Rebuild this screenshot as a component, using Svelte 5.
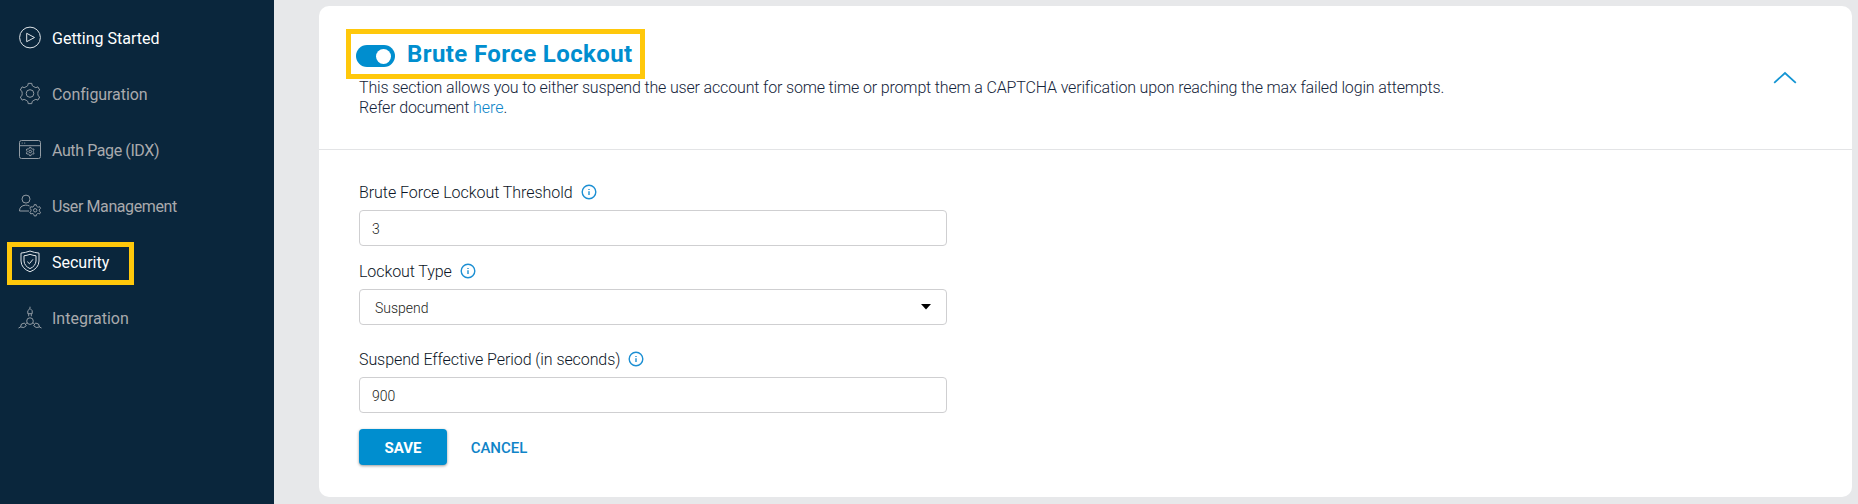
<script>
  const items = [
    { label: 'Getting Started', icon: 'play', bright: true, fit: 'f0' },
    { label: 'Configuration', icon: 'gear', fit: 'f1' },
    { label: 'Auth Page (IDX)', icon: 'page', fit: 'f3' },
    { label: 'User Management', icon: 'user', fit: 'f3' },
    { label: 'Security', icon: 'shield', bright: true, marked: true, fit: 'f0' },
    { label: 'Integration', icon: 'nodes', fit: 'f0' }
  ];

  // Outline of a rounded cog with the given centre, radii and number of teeth.
  function cog(cx, cy, outer, inner, teeth) {
    const step = (Math.PI * 2) / teeth;
    const at = (r, a) => `${(cx + r * Math.sin(a)).toFixed(2)} ${(cy - r * Math.cos(a)).toFixed(2)}`;
    let d = '';
    for (let i = 0; i < teeth; i++) {
      const a = i * step;
      d += `${i ? 'L' : 'M'}${at(outer, a - step * 0.17)}L${at(outer, a + step * 0.17)}L${at(inner + 0.3, a + step * 0.25)}Q${at(inner - 0.4, a + step * 0.5)} ${at(inner + 0.3, a + step * 0.75)}`;
    }
    return d + 'Z';
  }
</script>

{#snippet info()}
  <svg class="info" viewBox="0 0 16 16"><circle cx="8" cy="8" r="6.8" /><path d="M8 7.2v3.8M8 4.9v1.1" /></svg>
{/snippet}

<div class="page">
  <nav>
    {#each items as item}
      <a class="item" class:bright={item.bright} class:marked={item.marked}>
        <svg viewBox="0 0.5 24 24">
          {#if item.icon === 'play'}
            <circle cx="12" cy="12" r="10.4" /><path d="M8.7 7.8v8.4l7.8-4.2z" />
          {:else if item.icon === 'gear'}
            <path d={cog(12, 12, 10.3, 8, 6)} /><circle cx="12" cy="12" r="3.8" />
          {:else if item.icon === 'page'}
            <rect x="1.5" y="3" width="21" height="18" rx="2" />
            <path d="M1.5 8.2h21M3.7 5.6h1M6.2 5.6h1" />
            <path d={cog(12.2, 14, 4.2, 3.1, 6)} /><circle cx="12.2" cy="14" r="1.3" />
          {:else if item.icon === 'user'}
            <circle cx="8" cy="5.6" r="4" />
            <path d="M11.5 12.5Q9.7 11.6 7.6 11.6Q1.5 12.2 1.5 17.5H11" />
            <path d={cog(17.2, 16.8, 5.7, 4.2, 6)} /><circle cx="17.2" cy="16.8" r="1.7" />
          {:else if item.icon === 'shield'}
            <path d="M12 1.5Q7.5 3.2 3 3.6V11.5Q3.3 19 12 22.3Q20.7 19 21 11.5V3.6Q16.5 3.2 12 1.5Z" />
            <path d="M12 4.8Q9 6 6 6.3V11.5Q6.4 16.6 12 19.1Q17.6 16.6 18 11.5V6.3Q15 6 12 4.8Z" />
            <path d="M9.3 12.2L11.4 14.2L15 9.8" />
          {:else}
            <circle cx="12" cy="15.6" r="3.3" />
            <path d="M12 1.2v1.8M9.8 8.2V5.2L12 3L14.2 5.2V8.2ZM10.7 8.200v2.600M13.300 8.200v2.600" />
            <path d="M9.200 17.300L8 18M14.800 17.300L16 18M.5 22.500L2.500 21.500M23.500 22.500L21.500 21.500M2.500 21.500L3.500 18.500L6.500 17.500L8.300 20.200L5.800 22ZM21.500 21.500L20.500 18.500L17.500 17.500L15.700 20.200L18.200 22Z" />
          {/if}
        </svg>
        <span class={item.fit}>{item.label}</span>
      </a>
    {/each}
  </nav>

  <main>
    <section class="card">
      <header>
        <div class="intro">
          <div class="title">
            <span class="toggle"><i></i></span>
            <h1>Brute Force Lockout</h1>
          </div>
          <p>
            This section allows you to either suspend the user account for some time or prompt them a CAPTCHA verification upon reaching the max failed login attempts.<br />Refer document <a class="link">here</a>.
          </p>
        </div>
        <svg class="chevron" viewBox="0 0 24 14"><path d="M1.2 11.8L12 2L22.8 11.8" /></svg>
      </header>

      <form>
        <div class="label"><span>Brute Force Lockout Threshold</span>{@render info()}</div>
        <div class="field">3</div>
        <div class="label second"><span class="f1">Lockout Type</span>{@render info()}</div>
        <div class="field select">Suspend<svg viewBox="0 0 10 6"><path d="M0 0h10L5 5.5z" /></svg></div>
        <div class="label third"><span class="f1">Suspend Effective Period (in seconds)</span>{@render info()}</div>
        <div class="field">900</div>
        <div class="actions">
          <button type="button" class="save">SAVE</button>
          <button type="button" class="cancel">CANCEL</button>
        </div>
      </form>
    </section>
  </main>
</div>

<style>
  :global(body) { background: #e7e8ea; overflow: hidden; }
  .page { display: flex; height: 504px; font: 16px/20px Roboto, sans-serif; color: #14243a; }
  nav { box-sizing: border-box; width: 274px; padding-top: 10px; background: #0a263c; }
  .item { position: relative; display: flex; align-items: center; gap: 10px; height: 56px; padding-left: 18px; color: #a9aaad; }
  .item svg { width: 24px; height: 24px; fill: none; stroke: #939ca4; stroke-width: 1; stroke-linejoin: round; }
  .item span { padding-top: 2px; }
  .item.bright { color: #fff; }
  .item.bright svg { stroke: #dfe4e8; }
  .marked::after { content: ''; position: absolute; left: 7px; top: 8px; width: 117px; height: 33px; border: 5px solid #ffc80b; }
  .f0 { letter-spacing: 0; }
  .f1 { letter-spacing: -0.08px; }
  .f3 { letter-spacing: -0.4px; }

  main { flex: 1; padding: 6px 6px 7px 45px; }
  .card { height: 491px; border-radius: 10px; background: #fff; }
  header { box-sizing: border-box; display: flex; justify-content: space-between; height: 144px; padding: 35px 55px 0 40px; border-bottom: 1px solid #e3e4e6; }
  .title { position: relative; display: flex; align-items: center; gap: 12px; height: 30px; margin-left: -3px; }
  .title::after { content: ''; position: absolute; left: -10px; top: -12px; width: 289px; height: 40px; border: 5px solid #ffc80b; }
  .toggle { box-sizing: border-box; width: 39px; height: 22px; padding: 3px 4px; border-radius: 11px; background: #008ecf; display: flex; justify-content: flex-end; align-items: center; }
  .toggle i { width: 15px; height: 15px; border-radius: 50%; background: #fff; }
  h1 { margin: 0; padding-bottom: 5px; font-size: 24px; line-height: 28px; font-weight: 700; letter-spacing: 0.4px; color: #008ecf; }
  p { margin: 7px 0 0; font-weight: 300; letter-spacing: -0.155px; white-space: nowrap; }
  .link { color: #0a84c8; letter-spacing: 0; }
  .chevron { width: 24px; height: 14px; margin-top: 30px; fill: none; stroke: #1495d3; stroke-width: 1.8; }

  form { padding: 32px 0 0 40px; }
  .label { display: flex; align-items: center; gap: 8px; height: 20px; margin-bottom: 8px; font-weight: 300; color: #0b1526; letter-spacing: -0.05px; }
  .label span { padding-top: 2px; }
  .label.second { margin-top: 15px; }
  .label.third { margin-top: 24px; }
  .info { width: 16px; height: 16px; fill: none; stroke: #1c8fd3; stroke-width: 1.4; }
  .field { box-sizing: border-box; width: 588px; height: 36px; padding: 2px 12px 0; border: 1px solid #cfcfd1; border-radius: 4px; display: flex; align-items: center; justify-content: space-between; font-size: 14px; font-weight: 300; color: #1c1d20; }
  .select { padding: 2px 15px 0; }
  .select svg { width: 10px; height: 6px; margin-bottom: 2px; }
  .actions { display: flex; gap: 8px; margin-top: 16px; }
  button { height: 36px; border: 0; padding: 1px 0 0; border-radius: 4px; font: 700 15px Roboto, sans-serif; }
  .save { width: 88px; color: #fff; background: #008ecf; box-shadow: 0 1px 3px rgba(0, 0, 0, 0.4); }
  .cancel { width: 88px; color: #0f84c8; background: none; font-weight: 500; }
</style>
